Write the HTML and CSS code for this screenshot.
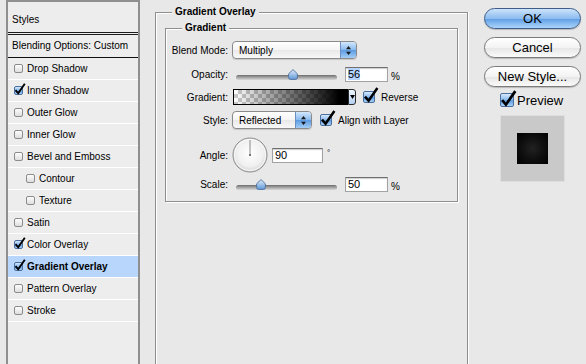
FILE: index.html
```html
<!DOCTYPE html>
<html lang="en">
<head>
  <meta charset="UTF-8">
  <title>Layer Style</title>
  <link rel="stylesheet" href="styles.css">
</head>
<body>

<div class="dialog">

  <div class="styles-list">
    <div class="list-head">Styles</div>
    <div class="list-blend">Blending Options: Custom</div>
    <div class="item"><span class="cb"></span>Drop Shadow</div>
    <div class="item"><span class="cb on"><svg viewBox="0 0 12 12"><path d="M1.5 7.2 L4.2 10.3 L10.8 0.8"/></svg></span>Inner Shadow</div>
    <div class="item"><span class="cb"></span>Outer Glow</div>
    <div class="item"><span class="cb"></span>Inner Glow</div>
    <div class="item"><span class="cb"></span>Bevel and Emboss</div>
    <div class="item sub"><span class="cb"></span>Contour</div>
    <div class="item sub"><span class="cb"></span>Texture</div>
    <div class="item"><span class="cb"></span>Satin</div>
    <div class="item"><span class="cb on"><svg viewBox="0 0 12 12"><path d="M1.5 7.2 L4.2 10.3 L10.8 0.8"/></svg></span>Color Overlay</div>
    <div class="item selected"><span class="cb on"><svg viewBox="0 0 12 12"><path d="M1.5 7.2 L4.2 10.3 L10.8 0.8"/></svg></span>Gradient Overlay</div>
    <div class="item"><span class="cb"></span>Pattern Overlay</div>
    <div class="item"><span class="cb"></span>Stroke</div>
  </div>

  <div class="main">
    <fieldset class="group outer">
      <legend>Gradient Overlay</legend>
      <fieldset class="group inner">
        <legend>Gradient</legend>
        <div class="form">

          <label>Blend Mode:</label>
          <div class="field">
            <div class="select select-blend">
              <span>Multiply</span>
              <span class="stepper"><svg width="7" height="11" viewBox="0 0 7 11"><path d="M3.5 1 L6 4.2 H1 Z M3.5 10 L6 6.8 H1 Z"/></svg></span>
            </div>
          </div>

          <label>Opacity:</label>
          <div class="field">
            <div class="slider">
              <div class="track"></div>
              <svg class="thumb" viewBox="0 0 10 11" style="left:56%"><defs><linearGradient id="tg1" x1="0" y1="0" x2="0" y2="1"><stop offset="0" stop-color="#e2eefc"/><stop offset="1" stop-color="#5f97d8"/></linearGradient></defs><path d="M5 0.6 L9.4 4.8 V8.5 Q9.4 10.4 7.5 10.4 H2.5 Q0.6 10.4 0.6 8.5 V4.8 Z" fill="url(#tg1)" stroke="#4d6f9a" stroke-width="0.9"/></svg>
            </div>
            <div class="num"><span class="sel">56</span></div>
            <span class="pct">%</span>
          </div>

          <label>Gradient:</label>
          <div class="field">
            <div class="swatch"></div>
            <div class="grad-arrow"><svg width="5" height="4" viewBox="0 0 5 4"><path d="M0 0 H5 L2.5 4 Z"/></svg></div>
            <span class="check-label"><span class="cb big on"><svg viewBox="0 0 12 12"><path d="M1.5 7.2 L4.2 10.3 L10.8 0.8"/></svg></span>Reverse</span>
          </div>

          <label>Style:</label>
          <div class="field">
            <div class="select select-style">
              <span>Reflected</span>
              <span class="stepper"><svg width="7" height="11" viewBox="0 0 7 11"><path d="M3.5 1 L6 4.2 H1 Z M3.5 10 L6 6.8 H1 Z"/></svg></span>
            </div>
            <span class="check-label"><span class="cb big on"><svg viewBox="0 0 12 12"><path d="M1.5 7.2 L4.2 10.3 L10.8 0.8"/></svg></span>Align with Layer</span>
          </div>

          <label>Angle:</label>
          <div class="field">
            <svg class="dial" width="36" height="36" viewBox="0 0 36 36"><defs><radialGradient id="dg" cx="0.5" cy="0.45" r="0.55"><stop offset="0" stop-color="#ffffff"/><stop offset="0.7" stop-color="#f0f0f0"/><stop offset="1" stop-color="#d2d2d2"/></radialGradient></defs><circle cx="18" cy="18" r="17" fill="url(#dg)" stroke="#8d8d8d"/><circle cx="18" cy="18" r="15.6" fill="none" stroke="#fff" stroke-width="0.8"/><line x1="18" y1="18" x2="18" y2="3" stroke="#8a8a8a"/><rect x="17" y="17" width="2" height="2" fill="#777"/></svg>
            <div class="num angle">90</div>
            <span class="deg">°</span>
          </div>

          <label>Scale:</label>
          <div class="field">
            <div class="slider">
              <div class="track"></div>
              <svg class="thumb" viewBox="0 0 10 11" style="left:25%"><defs><linearGradient id="tg2" x1="0" y1="0" x2="0" y2="1"><stop offset="0" stop-color="#e2eefc"/><stop offset="1" stop-color="#5f97d8"/></linearGradient></defs><path d="M5 0.6 L9.4 4.8 V8.5 Q9.4 10.4 7.5 10.4 H2.5 Q0.6 10.4 0.6 8.5 V4.8 Z" fill="url(#tg2)" stroke="#4d6f9a" stroke-width="0.9"/></svg>
            </div>
            <div class="num">50</div>
            <span class="pct">%</span>
          </div>

        </div>
      </fieldset>
    </fieldset>
  </div>

  <div class="side">
    <div class="btn default">OK</div>
    <div class="btn">Cancel</div>
    <div class="btn">New Style...</div>
    <div class="preview-row"><span class="cb large on"><svg viewBox="0 0 12 12"><path d="M1.5 7.2 L4.2 10.3 L10.8 0.8"/></svg></span>Preview</div>
    <div class="preview-box"><div class="preview-swatch"></div></div>
  </div>

</div>

</body>
</html>
```

FILE: styles.css
```css
* {
  box-sizing: border-box;
}
body {
  margin: 0;
  height: 364px;
  overflow: hidden;
  background-color: #e8e8e8;
  font-family: "Liberation Sans", Arial, sans-serif;
  font-size: 10px;
  color: #000;
}
.dialog {
  display: flex;
  align-items: flex-start;
  height: 364px;
  padding-left: 6px;
}

/* styles list on the left */
.styles-list {
  flex-shrink: 0;
  width: 134px;
  height: 364px;
  border: 2px solid #8f8f8f;
  border-bottom: none;
  background-color: #ededed;
}
.list-head {
  height: 33px;
  padding: 11px 0 0 4px;
  line-height: 14px;
  border-bottom: 3px double #1c1c1c;
}
.list-blend {
  height: 23px;
  padding-left: 4px;
  line-height: 22px;
  border-bottom: 1px solid #111;
}
.item {
  display: flex;
  align-items: center;
  height: 22px;
  padding-left: 6px;
  border-bottom: 1px solid #fff;
}
.item.sub {
  padding-left: 18px;
}
.item.selected {
  background-color: #b8d5fb;
  font-weight: bold;
}

/* checkboxes */
.cb {
  position: relative;
  flex-shrink: 0;
  display: inline-block;
  width: 9px;
  height: 9px;
  margin-right: 4px;
  border: 1px solid #8c8c8c;
  border-radius: 2px;
  background: linear-gradient(#fdfdfd, #dedede);
}
.cb.on {
  border-color: #4a6f9e;
  background: linear-gradient(#d6e8fc, #8ab9ed 50%, #5f9de2 55%, #a9d0f6);
}
.cb svg {
  position: absolute;
  left: -1px;
  top: -4px;
  width: 12px;
  height: 12px;
  overflow: visible;
}
.cb svg path {
  fill: none;
  stroke: #000;
  stroke-width: 1.9;
}
.cb.big {
  width: 12px;
  height: 12px;
  margin-right: 6px;
}
.cb.big svg {
  top: -5px;
  width: 16px;
  height: 16px;
}
.cb.large {
  width: 14px;
  height: 14px;
  margin-right: 3px;
}
.cb.large svg {
  top: -4px;
  width: 17px;
  height: 17px;
}

/* grouped boxes */
.main {
  flex-shrink: 0;
  margin-left: 15px;
}
.group {
  min-width: 0;
  margin: 0;
  padding: 0;
  border: 1px solid #8e8e8e;
  box-shadow: 1px 1px 0 #fff, inset 1px 1px 0 #fff;
}
.group legend {
  margin-left: 16px;
  padding: 0 3px;
  line-height: 14px;
  font-weight: bold;
  background-color: #e8e8e8;
}
.outer {
  width: 313px;
  height: 359px;
  margin-top: 5px;
  padding-top: 2px;
  border-bottom: none;
  box-shadow: 1px 0 0 #fff, inset 1px 1px 0 #fff;
}
.inner {
  width: 293px;
  margin-left: 9px;
  padding: 3px 0 11px;
}
.form {
  display: grid;
  grid-template-columns: 62px auto;
  grid-template-rows: 24px 24px 22px 24px 46px 12px;
  column-gap: 4px;
  align-items: center;
}
.form label {
  text-align: right;
}
.field {
  display: flex;
  align-items: center;
}

/* popup menus */
.select {
  display: flex;
  align-items: center;
  height: 18px;
  padding-left: 6px;
  border: 1px solid #8a8a8a;
  border-radius: 4px;
  background: linear-gradient(#fff, #f4f4f4 50%, #e9e9e9 52%, #f8f8f8);
  box-shadow: 0 1px 1px rgba(0, 0, 0, 0.15);
  overflow: hidden;
}
.select-blend {
  width: 125px;
}
.select-style {
  width: 80px;
}
.stepper {
  display: flex;
  align-items: center;
  justify-content: center;
  width: 16px;
  height: 100%;
  margin-left: auto;
  border-left: 1px solid #6b8fbf;
  background: linear-gradient(#d3e7fc, #88b9ee 50%, #5c9be2 52%, #a3cdf6);
}
.stepper path {
  fill: #1a1a1a;
}

/* sliders */
.slider {
  position: relative;
  width: 101px;
  height: 11px;
  margin-left: 4px;
  padding-top: 6px;
}
.track {
  height: 5px;
  border-radius: 3px;
  background: linear-gradient(#6c6c6c, #a6a6a6 50%, #d8d8d8);
}
.thumb {
  position: absolute;
  top: 0;
  width: 10px;
  height: 11px;
  margin-left: -5px;
}
.num {
  width: 43px;
  height: 15px;
  margin-left: 8px;
  padding-left: 2px;
  border: 1px solid #a2a2a2;
  border-top-color: #707070;
  background-color: #fff;
  box-shadow: inset 0 1px 1px rgba(0, 0, 0, 0.2);
  font-size: 11px;
  line-height: 13px;
}
.num .sel {
  background-color: #b5d5ff;
}
.pct {
  margin-left: 3px;
  align-self: flex-start;
  margin-top: 4px;
}

/* gradient swatch */
.swatch {
  width: 115px;
  height: 16px;
  margin-left: 1px;
  border: 1px solid #000;
  background:
    linear-gradient(to right, rgba(0, 0, 0, 0), #000 93%),
    repeating-conic-gradient(#cacaca 0 25%, #fff 0 50%) 0 0 / 8px 8px;
}
.grad-arrow {
  display: flex;
  align-items: center;
  justify-content: center;
  width: 8px;
  height: 16px;
  border: 1px solid #2a2a2a;
  border-radius: 0 3px 3px 0;
  background: linear-gradient(#eef5fd, #b4d0f0);
}
.check-label {
  display: flex;
  align-items: center;
  margin-left: 8px;
}
.field .grad-arrow + .check-label {
  margin-left: 7px;
}

/* angle */
.dial {
  flex-shrink: 0;
}
.num.angle {
  width: 51px;
  margin-left: 4px;
}
.deg {
  align-self: flex-start;
  margin: 11px 0 0 4px;
  font-size: 8px;
}

/* buttons on the right */
.side {
  display: flex;
  flex-direction: column;
  width: 97px;
  margin-left: 16px;
  padding-top: 8px;
}
.btn {
  height: 21px;
  margin-bottom: 8px;
  border: 1px solid #7a7a7a;
  border-radius: 11px;
  background: linear-gradient(#fff, #f3f3f3 50%, #e6e6e6 52%, #fafafa);
  box-shadow: 0 1px 1px rgba(0, 0, 0, 0.2);
  font-size: 13px;
  line-height: 19px;
  text-align: center;
}
.btn.default {
  border-color: #3e5d8a;
  background: linear-gradient(#cde4fb, #8cbcef 50%, #5f9fe5 52%, #acd5fa);
}
.preview-row {
  display: flex;
  align-items: center;
  height: 14px;
  margin: -2px 0 0 16px;
  font-size: 13px;
}
.preview-box {
  display: flex;
  align-items: center;
  justify-content: center;
  width: 65px;
  height: 67px;
  margin: 8px 0 0 16px;
  border: 1px solid #dedede;
  background-color: #c9c9c9;
}
.preview-swatch {
  width: 31px;
  height: 31px;
  background: radial-gradient(#222 0%, #111 45%, #000 100%);
}
```
